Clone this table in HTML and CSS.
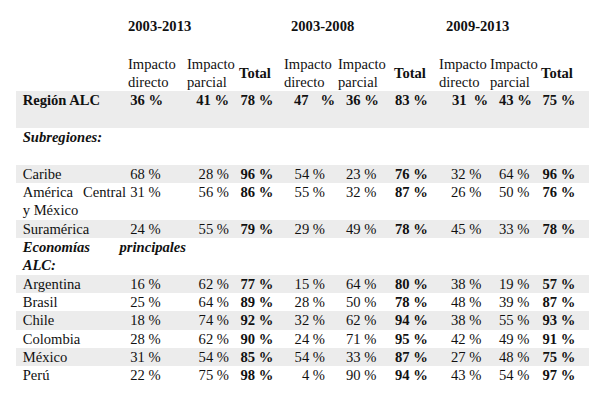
FILE: index.html
```html
<!DOCTYPE html>
<html lang="es">
<head>
<meta charset="utf-8">
<title>Impacto</title>
<link rel="stylesheet" href="styles.css">
</head>
<body>
<div class="page">
<table class="tbl">
  <colgroup>
    <col class="w-lab"><col class="w-c1"><col class="w-c2"><col class="w-c3"><col class="w-c4">
    <col class="w-c5"><col class="w-c6"><col class="w-c7"><col class="w-c8"><col class="w-c9">
  </colgroup>
  <tr class="years">
    <td></td>
    <td colspan="3" class="y1">2003-2013</td>
    <td colspan="3" class="y2">2003-2008</td>
    <td colspan="3" class="y3">2009-2013</td>
  </tr>
  <tr class="h">
    <td></td>
    <td>Impacto<br>directo</td>
    <td>Impacto<br>parcial</td>
    <td class="tot">Total</td>
    <td>Impacto<br>directo</td>
    <td>Impacto<br>parcial</td>
    <td class="tot">Total</td>
    <td>Impacto<br>directo</td>
    <td>Impacto<br>parcial</td>
    <td class="tot">Total</td>
  </tr>
  <tr class="d g tall bold">
    <td>Región ALC</td>
    <td>36 %</td><td>41 %</td><td>78 %</td>
    <td class="j4">47 %</td><td>36 %</td><td>83 %</td>
    <td class="j7">31 %</td><td>43 %</td><td>75 %</td>
  </tr>
  <tr class="tall">
    <td class="sec">Subregiones:</td>
    <td colspan="9"></td>
  </tr>
  <tr class="d g">
    <td>Caribe</td>
    <td>68 %</td><td>28 %</td><td>96 %</td>
    <td>54 %</td><td>23 %</td><td>76 %</td>
    <td>32 %</td><td>64 %</td><td>96 %</td>
  </tr>
  <tr class="d">
    <td class="lab-j">América Central y México</td>
    <td>31 %</td><td>56 %</td><td>86 %</td>
    <td>55 %</td><td>32 %</td><td>87 %</td>
    <td>26 %</td><td>50 %</td><td>76 %</td>
  </tr>
  <tr class="d g">
    <td>Suramérica</td>
    <td>24 %</td><td>55 %</td><td>79 %</td>
    <td>29 %</td><td>49 %</td><td>78 %</td>
    <td>45 %</td><td>33 %</td><td>78 %</td>
  </tr>
  <tr>
    <td colspan="2" class="sec sec-j">Economías principales ALC:</td>
    <td colspan="8"></td>
  </tr>
  <tr class="d g">
    <td>Argentina</td>
    <td>16 %</td><td>62 %</td><td>77 %</td>
    <td>15 %</td><td>64 %</td><td>80 %</td>
    <td>38 %</td><td>19 %</td><td>57 %</td>
  </tr>
  <tr class="d">
    <td>Brasil</td>
    <td>25 %</td><td>64 %</td><td>89 %</td>
    <td>28 %</td><td>50 %</td><td>78 %</td>
    <td>48 %</td><td>39 %</td><td>87 %</td>
  </tr>
  <tr class="d g">
    <td>Chile</td>
    <td>18 %</td><td>74 %</td><td>92 %</td>
    <td>32 %</td><td>62 %</td><td>94 %</td>
    <td>38 %</td><td>55 %</td><td>93 %</td>
  </tr>
  <tr class="d">
    <td>Colombia</td>
    <td>28 %</td><td>62 %</td><td>90 %</td>
    <td>24 %</td><td>71 %</td><td>95 %</td>
    <td>42 %</td><td>49 %</td><td>91 %</td>
  </tr>
  <tr class="d g">
    <td>México</td>
    <td>31 %</td><td>54 %</td><td>85 %</td>
    <td>54 %</td><td>33 %</td><td>87 %</td>
    <td>27 %</td><td>48 %</td><td>75 %</td>
  </tr>
  <tr class="d">
    <td>Perú</td>
    <td>22 %</td><td>75 %</td><td>98 %</td>
    <td>4 %</td><td>90 %</td><td>94 %</td>
    <td>43 %</td><td>54 %</td><td>97 %</td>
  </tr>
</table>
</div>
</body>
</html>
```

FILE: styles.css
```css
html, body {
  margin: 0;
  background: #ffffff;
}

body {
  font-family: "Liberation Serif", "Times New Roman", serif;
  font-size: 14.6px;
  color: #111111;
}

.page {
  padding: 16.8px 0 0 16px;
}

.tbl {
  border-collapse: collapse;
  border-spacing: 0;
  table-layout: fixed;
  width: 573px;
  line-height: 18.33px;
}

.tbl td {
  padding: 0;
  vertical-align: top;
  white-space: nowrap;
}

.w-lab { width: 110px; }
.w-c1 { width: 60px; }
.w-c2 { width: 51px; }
.w-c3 { width: 45px; }
.w-c4 { width: 55px; }
.w-c5 { width: 54px; }
.w-c6 { width: 45px; }
.w-c7 { width: 52px; }
.w-c8 { width: 52px; }
.w-c9 { width: 49px; }

/* year header row */
.years td {
  height: 38px;
  font-weight: bold;
}
.tbl .y1 { padding-left: 2px; }
.tbl .y2 { padding-left: 9px; }
.tbl .y3 { padding-left: 10px; }

/* sub header row */
.tbl .h td:nth-child(2) { padding-left: 2px; }
.tbl .h td:nth-child(3) { padding-left: 1px; }
.tbl .h td:nth-child(4) { padding-left: 2px; }
.tbl .h td:nth-child(5) { padding-left: 2px; }
.tbl .h td:nth-child(6) { padding-left: 1px; }
.tbl .h td:nth-child(7) { padding-left: 3px; }
.tbl .h td:nth-child(8) { padding-left: 3px; }
.tbl .h td:nth-child(9) { padding-left: 2px; }
.tbl .h td:nth-child(10) { padding-left: 1px; }
.tbl .h td.tot {
  font-weight: bold;
  vertical-align: middle;
}

/* data rows */
.g { background: #ececec; }
.tall td { height: 36.66px; }
.bold td { font-weight: bold; }

.tbl .d td:nth-child(1) { padding-left: 6.7px; }
.tbl .d td:nth-child(2) { padding-left: 4.3px; }
.tbl .d td:nth-child(3) { text-align: right; padding-right: 8px; }
.tbl .d td:nth-child(4) { padding-left: 3.5px; font-weight: bold; }
.tbl .d td:nth-child(5) { text-align: right; padding-right: 12px; }
.tbl .d td:nth-child(6) { padding-left: 9px; }
.tbl .d td:nth-child(7) { padding-left: 4px; font-weight: bold; }
.tbl .d td:nth-child(8) { padding-left: 15px; }
.tbl .d td:nth-child(9) { padding-left: 11px; }
.tbl .d td:nth-child(10) { padding-left: 2.5px; font-weight: bold; }

.tbl .d td.j4 {
  text-align: justify;
  text-align-last: justify;
  padding: 0 2px 0 12px;
}
.tbl .d td.j7 {
  text-align: justify;
  text-align-last: justify;
  padding: 0 0 0 16px;
}

.tbl .d td.lab-j {
  white-space: normal;
  text-align: justify;
}

.tbl td.sec {
  padding-left: 6.7px;
  font-weight: bold;
  font-style: italic;
}
.tbl td.sec-j {
  white-space: normal;
  text-align: justify;
}
```
